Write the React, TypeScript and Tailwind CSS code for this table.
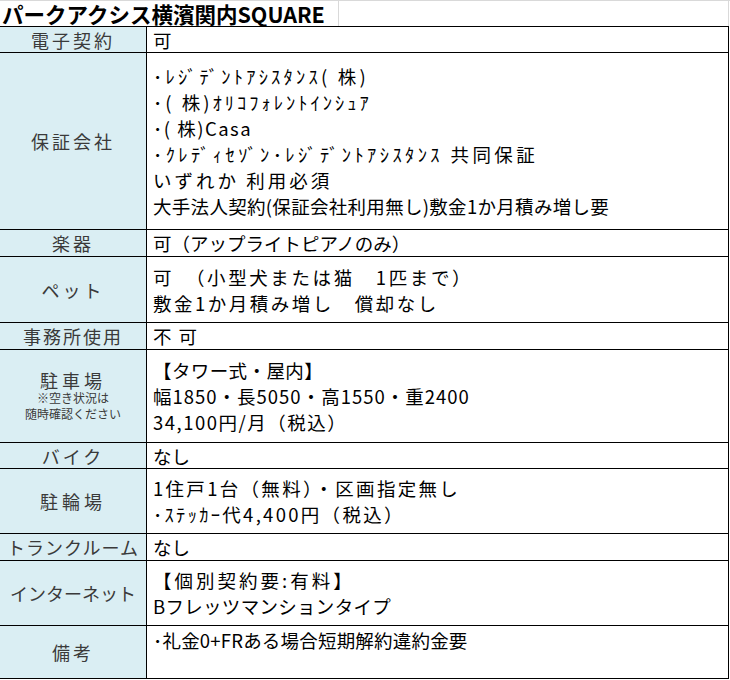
type Row = {
  label: React.ReactNode;
  lines: { text: string; cls?: string }[];
  h: string;
  top?: boolean;
};

const rows: Row[] = [
  { label: <span className="tracking-[3px]">電子契約</span>, lines: [{ text: "可" }], h: "h-[26px]" },
  {
    label: <span className="tracking-[3px]">保証会社</span>,
    h: "h-[177px]",
    lines: [
      { text: "･ﾚｼﾞﾃﾞﾝﾄｱｼｽﾀﾝｽ( 株)", cls: "tracking-[3.2px]" },
      { text: "･( 株)ｵﾘｺﾌｫﾚﾝﾄｲﾝｼｭｱ", cls: "tracking-[3px]" },
      { text: "･( 株)Casa", cls: "tracking-[1.5px]" },
      { text: "･ｸﾚﾃﾞｨｾｿﾞﾝ･ﾚｼﾞﾃﾞﾝﾄｱｼｽﾀﾝｽ 共同保証", cls: "tracking-[3.4px]" },
      { text: "いずれか 利用必須", cls: "tracking-[3px]" },
      { text: "大手法人契約(保証会社利用無し)敷金1か月積み増し要", cls: "tracking-[0.3px]" },
    ],
  },
  { label: <span className="tracking-[3px]">楽器</span>, lines: [{ text: "可（アップライトピアノのみ）" }], h: "h-[27px]" },
  {
    label: <span className="tracking-[3px]">ペット</span>,
    h: "h-[66px]",
    lines: [
      { text: "可　（小型犬または猫　1匹まで）", cls: "tracking-[2.6px]" },
      { text: "敷金1か月積み増し　償却なし", cls: "tracking-[2.5px]" },
    ],
  },
  { label: <span className="tracking-[2px]">事務所使用</span>, lines: [{ text: "不可", cls: "tracking-[7px]" }], h: "h-[27px]" },
  {
    label: (
      <div className="flex flex-col items-center">
        <span className="leading-[20px] tracking-[4px]">駐車場</span>
        <span className="text-[12px] leading-[16px]">※空き状況は</span>
        <span className="text-[12px] leading-[16px]">随時確認ください</span>
      </div>
    ),
    h: "h-[93px]",
    lines: [
      { text: "【タワー式・屋内】", cls: "tracking-[0.4px]" },
      { text: "幅1850・長5050・高1550・重2400", cls: "tracking-[1px]" },
      { text: "34,100円/月（税込）", cls: "tracking-[1.5px]" },
    ],
  },
  { label: <span className="tracking-[3px]">バイク</span>, lines: [{ text: "なし" }], h: "h-[26px]" },
  {
    label: <span className="tracking-[4px]">駐輪場</span>,
    h: "h-[65px]",
    lines: [
      { text: "1住戸1台（無料）・区画指定無し", cls: "tracking-[2.3px]" },
      { text: "･ｽﾃｯｶｰ代4,400円（税込）", cls: "tracking-[2.3px]" },
    ],
  },
  { label: <span className="tracking-[1px]">トランクルーム</span>, lines: [{ text: "なし" }], h: "h-[27px]" },
  {
    label: <span>インターネット</span>,
    h: "h-[65px]",
    lines: [
      { text: "【個別契約要:有料】", cls: "tracking-[3px]" },
      { text: "Bフレッツマンションタイプ", cls: "tracking-[0.3px]" },
    ],
  },
  {
    label: <span className="tracking-[3px]">備考</span>,
    h: "h-[53px]",
    top: true,
    lines: [{ text: "･礼金0+FRある場合短期解約違約金要", cls: "tracking-[0.2px]" }],
  },
];

export default function App() {
  return (
    <div className="h-[680px] w-[730px] bg-white font-['Noto_Sans_CJK_JP',sans-serif] text-black">
      <div className="flex h-[26px] border-t border-[#d9d9d9]">
        <div className="flex w-[339px] shrink-0 items-center whitespace-nowrap border-r border-[#d9d9d9] pl-[2px] text-[21.5px] font-bold leading-[24px]">
          パークアクシス横濱関内SQUARE
        </div>
        <div className="w-[390px] border-r border-[#d9d9d9]" />
      </div>

      <div className="w-[729px] border-t border-r border-black">
        {rows.map((row, i) => (
          <div key={i} className={`flex border-b border-black ${row.h}`}>
            <div className="flex w-[147px] shrink-0 items-center justify-center border-r border-black bg-[#daeef3] text-[18px] leading-[24px] text-[#3a3a3a]">
              {row.label}
            </div>
            <div
              className={`flex flex-1 flex-col whitespace-nowrap pl-[6px] text-[18.5px] leading-[26px] ${
                row.top ? "justify-start pt-[1px]" : "justify-center"
              }`}
            >
              {row.lines.map((l, j) => (
                <div key={j} className={l.cls}>
                  {l.text}
                </div>
              ))}
            </div>
          </div>
        ))}
      </div>
    </div>
  );
}
